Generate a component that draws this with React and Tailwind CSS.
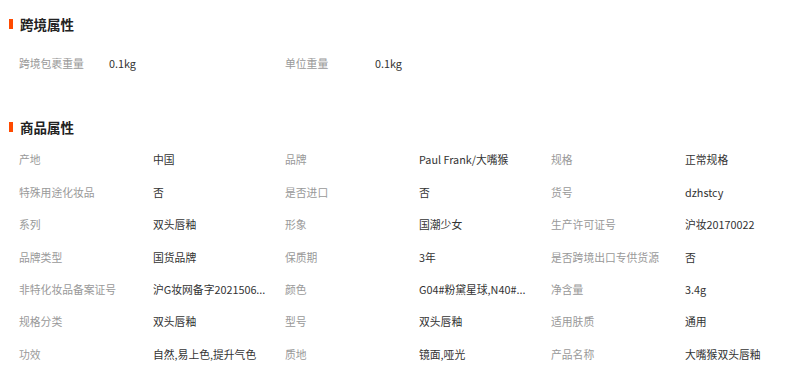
import React from 'react';

const crossBorder = [
  { label: '跨境包裹重量', value: '0.1kg' },
  { label: '单位重量', value: '0.1kg' },
];

// values are already cut the way the shop page shows them
const attrs = [
  { label: '产地', value: '中国' },
  { label: '品牌', value: 'Paul Frank/大嘴猴' },
  { label: '规格', value: '正常规格' },
  { label: '特殊用途化妆品', value: '否' },
  { label: '是否进口', value: '否' },
  { label: '货号', value: 'dzhstcy' },
  { label: '系列', value: '双头唇釉' },
  { label: '形象', value: '国潮少女' },
  { label: '生产许可证号', value: '沪妆20170022' },
  { label: '品牌类型', value: '国货品牌' },
  { label: '保质期', value: '3年' },
  { label: '是否跨境出口专供货源', value: '否' },
  { label: '非特化妆品备案证号', value: '沪G妆网备字2021506...' },
  { label: '颜色', value: 'G04#粉黛星球,N40#...' },
  { label: '净含量', value: '3.4g' },
  { label: '规格分类', value: '双头唇釉' },
  { label: '型号', value: '双头唇釉' },
  { label: '适用肤质', value: '通用' },
  { label: '功效', value: '自然,易上色,提升气色' },
  { label: '质地', value: '镜面,哑光' },
  { label: '产品名称', value: '大嘴猴双头唇釉' },
];

function Title({ children }) {
  return (
    <div className="flex items-center h-[18px]">
      <span className="w-[4px] h-[10px] bg-[#ff4a00] mr-[7px]" />
      <h2 className="text-[13.5px] font-bold text-[#222] leading-[18px]">{children}</h2>
    </div>
  );
}

function Attr({ label, value, labelWidth }) {
  return (
    <div className="flex items-center h-[32.4px]">
      <span className={`${labelWidth} shrink-0 text-[#999] whitespace-nowrap`}>{label}</span>
      <span className="text-[#333] whitespace-nowrap">{value}</span>
    </div>
  );
}

export default function App() {
  return (
    <div
      className="w-[809px] h-[374px] overflow-hidden bg-white pl-[9px] text-[10.8px]"
      style={{ fontFamily: '"Noto Sans CJK SC", "Noto Sans", sans-serif' }}
    >
      <section className="pt-[15px]">
        <Title>跨境属性</Title>
        <div className="mt-[14px] pl-[10px] grid grid-cols-[266px_266px]">
          {crossBorder.map((a) => (
            <Attr key={a.label} {...a} labelWidth="w-[90px]" />
          ))}
        </div>
      </section>

      <section className="mt-[39px]">
        <Title>商品属性</Title>
        <div className="mt-[7px] pl-[10px] grid grid-cols-[266px_266px_1fr]">
          {attrs.map((a) => (
            <Attr key={a.label} {...a} labelWidth="w-[134px]" />
          ))}
        </div>
      </section>
    </div>
  );
}
